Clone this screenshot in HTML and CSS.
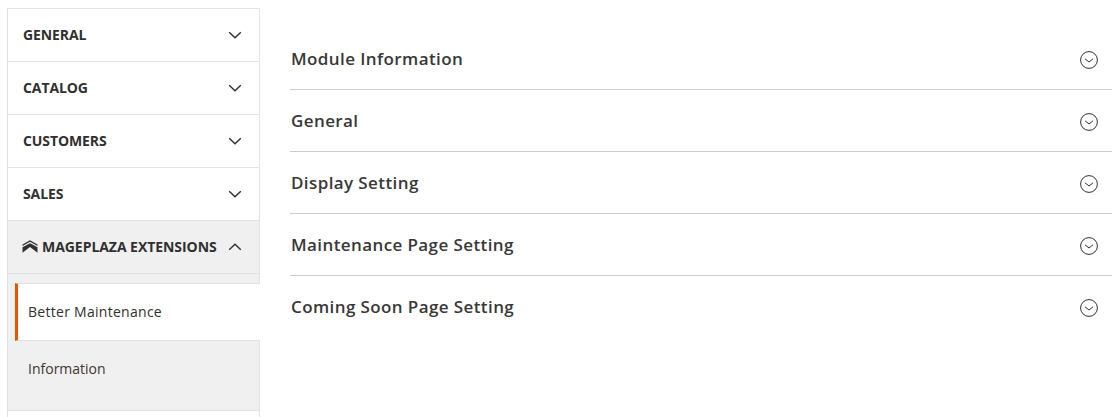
FILE: index.html
```html
<!DOCTYPE html>
<html lang="en">
<head>
<meta charset="utf-8">
<title>Configuration</title>
<link rel="stylesheet" href="styles.css">
</head>
<body>
<div class="page">
  <nav class="side">
    <div class="tab"><span>GENERAL</span><svg class="chev" viewBox="0 0 14 8"><path d="M1.2 1.2 7 6.8l5.8-5.6"/></svg></div>
    <div class="tab"><span>CATALOG</span><svg class="chev" viewBox="0 0 14 8"><path d="M1.2 1.2 7 6.8l5.8-5.6"/></svg></div>
    <div class="tab"><span>CUSTOMERS</span><svg class="chev" viewBox="0 0 14 8"><path d="M1.2 1.2 7 6.8l5.8-5.6"/></svg></div>
    <div class="tab"><span>SALES</span><svg class="chev" viewBox="0 0 14 8"><path d="M1.2 1.2 7 6.8l5.8-5.6"/></svg></div>
    <div class="tab open">
      <span class="brand"><svg class="logo" viewBox="0 0 16 13"><path d="M0.5 4.600 8 0.200l7.500 4.400v1.500L8 1.800 0.500 6.100zM0.500 7.300 8 3.200l7.500 4.100V12.800L8 6.900 0.500 12.800z"/></svg><span class="label">MAGEPLAZA EXTENSIONS</span></span>
      <svg class="chev" viewBox="0 0 14 8"><path d="M1.2 6.800 7 1.200l5.800 5.600"/></svg>
    </div>
    <div class="subs">
      <div class="sub active">Better Maintenance</div>
      <div class="sub">Information</div>
    </div>
    <div class="tail"></div>
  </nav>
  <main class="main">
    <section class="row"><h2>Module Information</h2><svg class="circ" viewBox="0 0 18 18"><circle cx="9" cy="9" r="8.400"/><path d="M5 7.800 9 11l4-3.200"/></svg></section>
    <section class="row"><h2>General</h2><svg class="circ" viewBox="0 0 18 18"><circle cx="9" cy="9" r="8.400"/><path d="M5 7.800 9 11l4-3.200"/></svg></section>
    <section class="row"><h2>Display Setting</h2><svg class="circ" viewBox="0 0 18 18"><circle cx="9" cy="9" r="8.400"/><path d="M5 7.800 9 11l4-3.200"/></svg></section>
    <section class="row"><h2>Maintenance Page Setting</h2><svg class="circ" viewBox="0 0 18 18"><circle cx="9" cy="9" r="8.400"/><path d="M5 7.800 9 11l4-3.200"/></svg></section>
    <section class="row last"><h2>Coming Soon Page Setting</h2><svg class="circ" viewBox="0 0 18 18"><circle cx="9" cy="9" r="8.400"/><path d="M5 7.800 9 11l4-3.200"/></svg></section>
  </main>
</div>
</body>
</html>
```
FILE: styles.css
```css
* { box-sizing: border-box; }
html, body { margin: 0; height: 100%; overflow: hidden; background: #fff; }
body { font-family: "Open Sans", "Liberation Sans", sans-serif; color: #303030; }
.page { display: flex; align-items: flex-start; padding: 8px 1px 0 7px; height: 417px; overflow: hidden; }

.side { flex: 0 0 253px; width: 253px; }
.tab {
  height: 53px;
  display: flex;
  align-items: center;
  justify-content: space-between;
  padding: 0 17px 0 15px;
  border: 1px solid #e3e3e3;
  border-bottom: 0;
  font-size: 14px;
  font-weight: 700;
  color: #303030;
  letter-spacing: -0.1px;
  background: #fff;
}
.tab span { position: relative; top: -1px; }
.tab .label { top: 0; left: 1px; letter-spacing: -0.05px; }
.tab.open {
  background: #f0f0f0;
  height: 54px;
  border-bottom: 1px solid #e3e3e3;
  padding-left: 14px;
}
.brand { display: flex; align-items: center; gap: 3px; }
.logo { width: 16px; height: 13px; fill: #303030; }
.chev { width: 14px; height: 8px; fill: none; stroke: #303030; stroke-width: 1.4; }

.subs {
  background: #f0f0f0;
  border-left: 1px solid #e3e3e3;
  border-right: 1px solid #e3e3e3;
  border-bottom: 1px solid #e3e3e3;
  padding: 9px 0 0 7px;
}
.sub {
  font-size: 14px;
  color: #41362f;
  height: 69px;
  padding: 18px 0 0 13px;
  margin-right: -1px;
  line-height: 19px;
}
.sub.active {
  height: 58px;
  background: #fff;
  color: #303030;
  border-left: 3px solid #eb5202;
  border-top: 1px solid #e3e3e3;
  border-bottom: 1px solid #e3e3e3;
  padding: 18px 0 0 10px;
  letter-spacing: 0.28px;
}
.tail {
  height: 8px;
  border-left: 1px solid #e3e3e3;
  border-right: 1px solid #e3e3e3;
}

.main { flex: 1; margin-left: 30px; padding-top: 20px; }
.row {
  height: 62px;
  display: flex;
  align-items: center;
  justify-content: space-between;
  padding: 0 14px 0 1px;
  border-bottom: 1px solid #cccccc;
}
.row.last { border-bottom-color: transparent; }
.row h2 {
  margin: 0;
  font-size: 17px;
  font-weight: 600;
  letter-spacing: 0.4px;
  color: #383838;
}
.circ { width: 18px; height: 18px; fill: none; stroke: #303030; stroke-width: 1; position: relative; top: 1px; }
```
